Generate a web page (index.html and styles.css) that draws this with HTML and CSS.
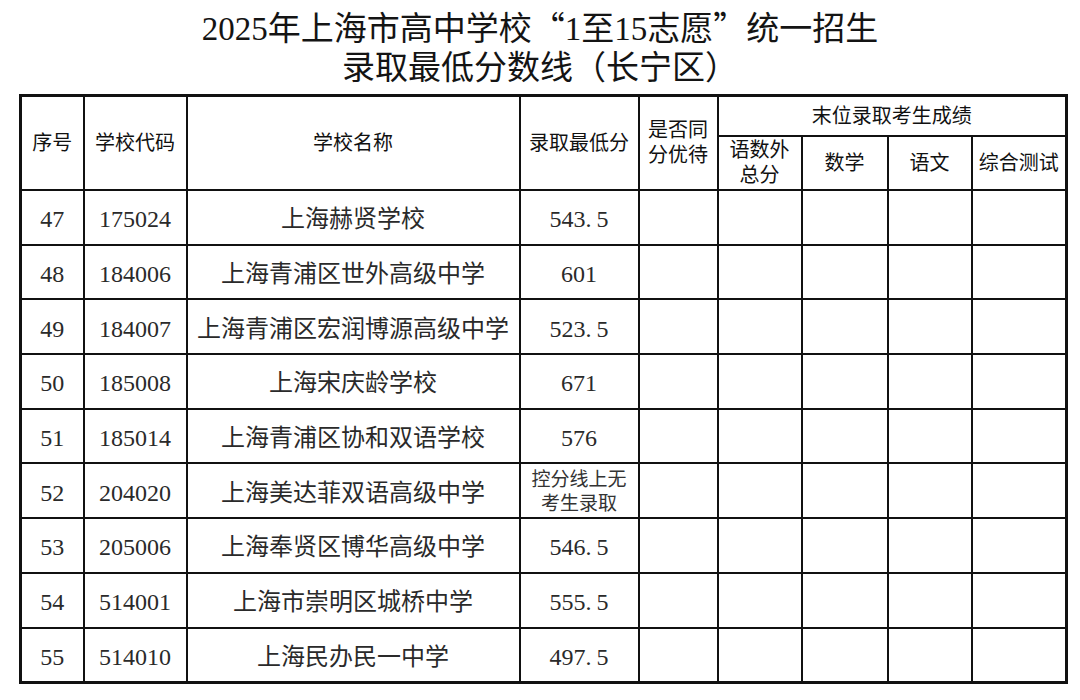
FILE: index.html
```html
<!DOCTYPE html>
<html lang="zh-CN">
<head>
<meta charset="utf-8">
<title>2025年上海市高中学校“1至15志愿”统一招生录取最低分数线（长宁区）</title>
<link rel="stylesheet" href="styles.css">
</head>
<body>
<h1 class="title">
  <span class="line">2025年上海市高中学校<span class="q">“</span>1至15志愿<span class="q">”</span>统一招生</span>
  <span class="line">录取最低分数线（长宁区）</span>
</h1>
<table class="grid">
  <colgroup>
    <col class="c-no"><col class="c-code"><col class="c-name"><col class="c-min"><col class="c-tie">
    <col class="c-tot"><col class="c-math"><col class="c-chn"><col class="c-comp">
  </colgroup>
  <thead>
    <tr class="hr1">
      <th rowspan="2">序号</th>
      <th rowspan="2">学校代码</th>
      <th rowspan="2">学校名称</th>
      <th rowspan="2">录取最低分</th>
      <th rowspan="2">是否同<br>分优待</th>
      <th colspan="4">末位录取考生成绩</th>
    </tr>
    <tr class="hr2">
      <th>语数外<br>总分</th>
      <th>数学</th>
      <th>语文</th>
      <th>综合测试</th>
    </tr>
  </thead>
  <tbody>
    <tr><td>47</td><td>175024</td><td class="name">上海赫贤学校</td><td>543<span class="pt">.</span>5</td><td></td><td></td><td></td><td></td><td></td></tr>
    <tr><td>48</td><td>184006</td><td class="name">上海青浦区世外高级中学</td><td>601</td><td></td><td></td><td></td><td></td><td></td></tr>
    <tr><td>49</td><td>184007</td><td class="name">上海青浦区宏润博源高级中学</td><td>523<span class="pt">.</span>5</td><td></td><td></td><td></td><td></td><td></td></tr>
    <tr><td>50</td><td>185008</td><td class="name">上海宋庆龄学校</td><td>671</td><td></td><td></td><td></td><td></td><td></td></tr>
    <tr><td>51</td><td>185014</td><td class="name">上海青浦区协和双语学校</td><td>576</td><td></td><td></td><td></td><td></td><td></td></tr>
    <tr><td>52</td><td>204020</td><td class="name">上海美达菲双语高级中学</td><td class="note">控分线上无<br>考生录取</td><td></td><td></td><td></td><td></td><td></td></tr>
    <tr><td>53</td><td>205006</td><td class="name">上海奉贤区博华高级中学</td><td>546<span class="pt">.</span>5</td><td></td><td></td><td></td><td></td><td></td></tr>
    <tr><td>54</td><td>514001</td><td class="name">上海市崇明区城桥中学</td><td>555<span class="pt">.</span>5</td><td></td><td></td><td></td><td></td><td></td></tr>
    <tr><td>55</td><td>514010</td><td class="name">上海民办民一中学</td><td>497<span class="pt">.</span>5</td><td></td><td></td><td></td><td></td><td></td></tr>
  </tbody>
</table>
</body>
</html>
```
FILE: styles.css
```css
html, body {
  margin: 0;
  padding: 0;
  background: #ffffff;
}

body {
  font-family: "Liberation Serif", "Noto Sans CJK SC", serif;
  color: #1c1c1c;
}

.title {
  margin: 0;
  padding: 7px 0 6px;
  text-align: center;
  font-size: 33px;
  line-height: 39px;
  font-weight: 400;
  color: #141414;
}

.title .line {
  display: block;
}

.q {
  font-family: "Noto Sans CJK SC", sans-serif;
}

.grid {
  margin-left: 19px;
  width: 1046px;
  border-collapse: collapse;
  table-layout: fixed;
  border: 3px solid #111;
}

.c-no { width: 63px; }
.c-code { width: 103px; }
.c-name { width: 333px; }
.c-min { width: 119px; }
.c-tie { width: 79px; }
.c-tot { width: 84px; }
.c-math { width: 86px; }
.c-chn { width: 84px; }
.c-comp { width: 95px; }

.grid th,
.grid td {
  border: 2px solid #111;
  padding: 0;
  text-align: center;
  vertical-align: middle;
}

.grid th {
  font-size: 20px;
  font-weight: 400;
  line-height: 25px;
  color: #111;
  white-space: nowrap;
}

.hr1 th {
  height: 38px;
}

.hr2 th {
  height: 52px;
}

.grid td {
  height: 48.7px;
  padding-top: 4px;
  font-size: 24px;
  line-height: 28px;
  color: #2a2a2a;
}

.grid td.name {
  font-size: 24px;
  white-space: nowrap;
}

.grid td.note {
  padding-top: 2px;
  font-size: 19px;
  line-height: 24px;
  color: #333;
}

.pt {
  padding-right: 5px;
}
```
